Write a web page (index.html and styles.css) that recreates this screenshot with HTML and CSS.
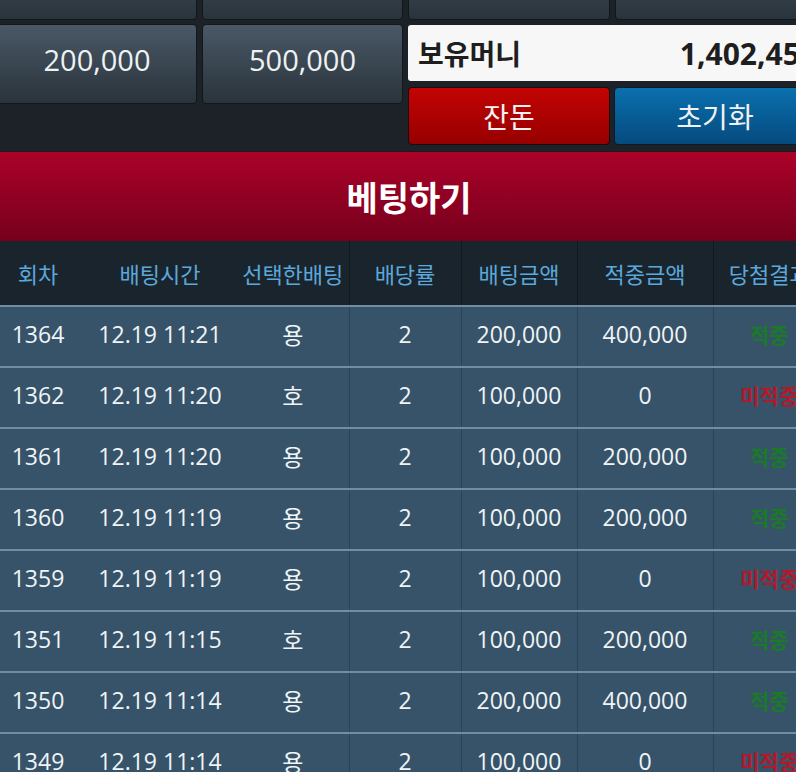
FILE: index.html
```html
<!DOCTYPE html>
<html lang="ko">
<head>
    <meta charset="UTF-8">
    <meta name="viewport" content="width=device-width, initial-scale=1.0">
    <title>베팅하기</title>
    <link rel="stylesheet" href="styles.css">
</head>
<body>
    <div class="screen">
        <div class="page">
            <div class="panel">
                <button class="chip"></button>
                <button class="chip"></button>
                <button class="chip"></button>
                <button class="chip"></button>

                <button class="chip">200,000</button>
                <button class="chip">500,000</button>
                <div class="money-area">
                    <div class="money-box">
                        <span class="money-label">보유머니</span>
                        <span class="money-value">1,402,453</span>
                    </div>
                    <div class="money-actions">
                        <button class="action red">잔돈</button>
                        <button class="action blue">초기화</button>
                    </div>
                </div>
            </div>

            <div class="bet-title">베팅하기</div>

            <table class="history">
                <colgroup>
                    <col class="c-round">
                    <col class="c-time">
                    <col class="c-pick">
                    <col class="c-rate">
                    <col class="c-amount">
                    <col class="c-win">
                    <col class="c-result">
                </colgroup>
                <thead>
                    <tr>
                        <th>회차</th>
                        <th>배팅시간</th>
                        <th>선택한배팅</th>
                        <th>배당률</th>
                        <th>배팅금액</th>
                        <th>적중금액</th>
                        <th>당첨결과</th>
                    </tr>
                </thead>
                <tbody>
                    <tr><td>1364</td><td>12.19 11:21</td><td>용</td><td>2</td><td>200,000</td><td>400,000</td><td class="hit">적중</td></tr>
                    <tr><td>1362</td><td>12.19 11:20</td><td>호</td><td>2</td><td>100,000</td><td>0</td><td class="miss">미적중</td></tr>
                    <tr><td>1361</td><td>12.19 11:20</td><td>용</td><td>2</td><td>100,000</td><td>200,000</td><td class="hit">적중</td></tr>
                    <tr><td>1360</td><td>12.19 11:19</td><td>용</td><td>2</td><td>100,000</td><td>200,000</td><td class="hit">적중</td></tr>
                    <tr><td>1359</td><td>12.19 11:19</td><td>용</td><td>2</td><td>100,000</td><td>0</td><td class="miss">미적중</td></tr>
                    <tr><td>1351</td><td>12.19 11:15</td><td>호</td><td>2</td><td>100,000</td><td>200,000</td><td class="hit">적중</td></tr>
                    <tr><td>1350</td><td>12.19 11:14</td><td>용</td><td>2</td><td>200,000</td><td>400,000</td><td class="hit">적중</td></tr>
                    <tr><td>1349</td><td>12.19 11:14</td><td>용</td><td>2</td><td>100,000</td><td>0</td><td class="miss">미적중</td></tr>
                </tbody>
            </table>
        </div>
    </div>
</body>
</html>
```

FILE: styles.css
```css
body {
    margin: 0;
    background-color: #ffffff;
    font-family: "Open Sans", "Noto Sans CJK KR", sans-serif;
}
.screen {
    width: 796px;
    height: 772px;
    overflow: hidden;
    background-color: #1c2227;
}
.page {
    width: 832px;
    margin-left: -7px;
}

/* chip buttons + money */
.panel {
    display: grid;
    grid-template-columns: 200px 201px 202px 202px;
    column-gap: 5px;
    row-gap: 4px;
    margin-top: -60px;
    margin-left: 4px;
    padding-bottom: 6px;
    align-items: start;
}
.chip {
    height: 80px;
    border: 1px solid #12171b;
    border-radius: 4px;
    background: linear-gradient(#4a5866, #29333b);
    color: #eef2f4;
    font-family: inherit;
    font-size: 29px;
    padding: 0 0 10px;
}
.money-area {
    grid-column: span 2;
    display: flex;
    flex-direction: column;
    gap: 6px;
    padding-top: 1px;
}
.money-box {
    height: 56px;
    box-sizing: border-box;
    background-color: #f7f7f7;
    border-radius: 3px;
    display: flex;
    align-items: center;
    justify-content: space-between;
    padding: 0 0 0 10px;
    color: #1e1e1e;
    font-weight: bold;
}
.money-label {
    font-size: 28px;
}
.money-value {
    font-size: 30px;
}
.money-actions {
    display: grid;
    grid-template-columns: 202px 202px;
    column-gap: 4px;
}
.action {
    height: 58px;
    border: 1px solid #1a0c0c;
    border-radius: 4px;
    color: #f2f2f2;
    font-family: inherit;
    font-size: 28px;
    padding: 0;
}
.red {
    background: linear-gradient(#c30303, #960000);
}
.blue {
    background: linear-gradient(#0a70ae, #054a7e);
    border-color: #0c1b26;
}

.bet-title {
    height: 89px;
    border-top: 1px solid #2a1418;
    background: linear-gradient(#ab0229, #76001c);
    color: #ffffff;
    font-size: 34px;
    font-weight: bold;
    display: flex;
    align-items: center;
    justify-content: center;
}

/* history table */
.history {
    width: 832px;
    border-collapse: collapse;
    table-layout: fixed;
    text-align: center;
}
.c-round { width: 90px; }
.c-time { width: 154px; }
.c-pick { width: 112px; }
.c-rate { width: 112px; }
.c-amount { width: 116px; }
.c-win { width: 136px; }
.c-result { width: 112px; }

.history th {
    height: 64px;
    padding: 0;
    background-color: #1a242d;
    color: #5ba8dc;
    font-size: 22px;
    font-weight: normal;
    border-bottom: 2px solid #6f8ea3;
}
.history th:nth-child(n+4) {
    border-left: 1px solid #111920;
}
.history td {
    height: 53px;
    padding: 0 0 6px;
    background-color: #36536a;
    color: #f0f4f6;
    font-size: 23px;
    border-top: 2px solid #6f8ea3;
}
.history td:nth-child(n+4) {
    border-left: 1px solid #2a4256;
}
.history tbody tr:first-child td {
    border-top: none;
}
.hit,
.miss {
    font-size: 21px !important;
    font-weight: bold;
}
.hit {
    color: #1b7a28 !important;
}
.miss {
    color: #b3192a !important;
}
```
